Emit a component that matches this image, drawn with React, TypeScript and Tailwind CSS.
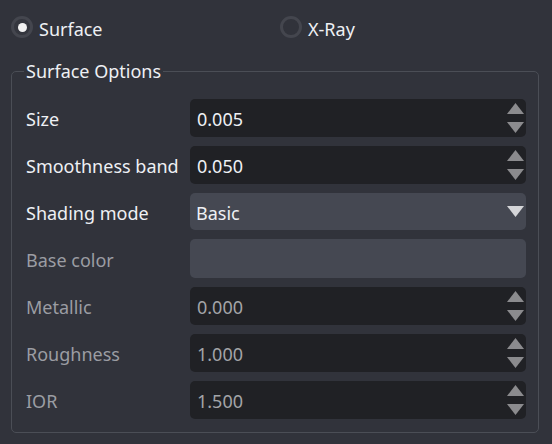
import React from "react";

const Spin = () => (
  <div className="flex flex-col justify-between h-[30px] w-[17px]">
    <svg width="17" height="11" viewBox="0 0 17 11"><polygon points="8.5,0 17,11 0,11" fill="#8b8b8e" /></svg>
    <svg width="17" height="11" viewBox="0 0 17 11"><polygon points="0,0 17,0 8.5,11" fill="#8b8b8e" /></svg>
  </div>
);

function NumRow({ label, value, disabled }: { label: string; value: string; disabled?: boolean }) {
  return (
    <div className="flex items-center h-[38px]">
      <div className={`w-[164px] shrink-0 pt-[2px] ${disabled ? "text-[#9b9da3]" : "text-[#eef0f4]"}`}>{label}</div>
      <div className="flex-1 h-full rounded-[5px] bg-[#202125] flex items-center pl-[7px] pr-[2px]">
        <span className={`flex-1 pt-[2px] ${disabled ? "text-[#a3a4a8]" : "text-[#eef0f4]"}`}>{value}</span>
        <Spin />
      </div>
    </div>
  );
}

export default function App() {
  return (
    <div
      className="w-[552px] h-[444px] bg-[#31333b] text-[18px] leading-[24px] overflow-hidden"
      style={{ fontFamily: '"Noto Sans", "Open Sans", sans-serif' }}
    >
      <div className="flex pl-[11px] pt-[16px] h-[59px]">
        <div className="w-[269px] flex items-start gap-[6px] h-[22px]">
          <div className="w-[22px] h-[22px] rounded-full border-[3px] border-[#44464e] bg-[#34363e] flex items-center justify-center">
            <div className="w-[9px] h-[9px] rounded-full bg-[#f2f2f2]" />
          </div>
          <span className="text-[#eef0f4] pt-[1px]">Surface</span>
        </div>
        <div className="flex items-start gap-[6px] h-[22px]">
          <div className="w-[22px] h-[22px] rounded-full border-[3px] border-[#44464e] bg-[#31333b]" />
          <span className="text-[#eef0f4] pt-[1px]">X-Ray</span>
        </div>
      </div>
      <fieldset className="ml-[11px] mr-[13px] h-[374px] border border-[#4b4e56] rounded-[5px] pl-[14px] pr-[12px] pt-[16px]">
        <legend className="ml-[-2px] px-[2px] text-[#eef0f4]">Surface Options</legend>
        <div className="flex flex-col gap-[9px]">
          <NumRow label="Size" value="0.005" />
          <NumRow label="Smoothness band" value="0.050" />
          <div className="flex items-center h-[37px]">
            <div className="w-[164px] shrink-0 pt-[2px] text-[#eef0f4]">Shading mode</div>
            <div className="flex-1 h-full rounded-[5px] bg-[#454852] flex items-center pl-[6px] pr-[2px]">
              <span className="flex-1 pt-[2px] text-[#eef0f4]">Basic</span>
              <svg width="17" height="11" viewBox="0 0 17 11"><polygon points="0,0 17,0 8.5,11" fill="#d4d5d8" /></svg>
            </div>
          </div>
          <div className="flex items-center h-[39px]">
            <div className="w-[164px] shrink-0 pt-[2px] text-[#9b9da3]">Base color</div>
            <div className="flex-1 h-full rounded-[5px] bg-[#454852]" />
          </div>
          <NumRow label="Metallic" value="0.000" disabled />
          <NumRow label="Roughness" value="1.000" disabled />
          <NumRow label="IOR" value="1.500" disabled />
        </div>
      </fieldset>
    </div>
  );
}
